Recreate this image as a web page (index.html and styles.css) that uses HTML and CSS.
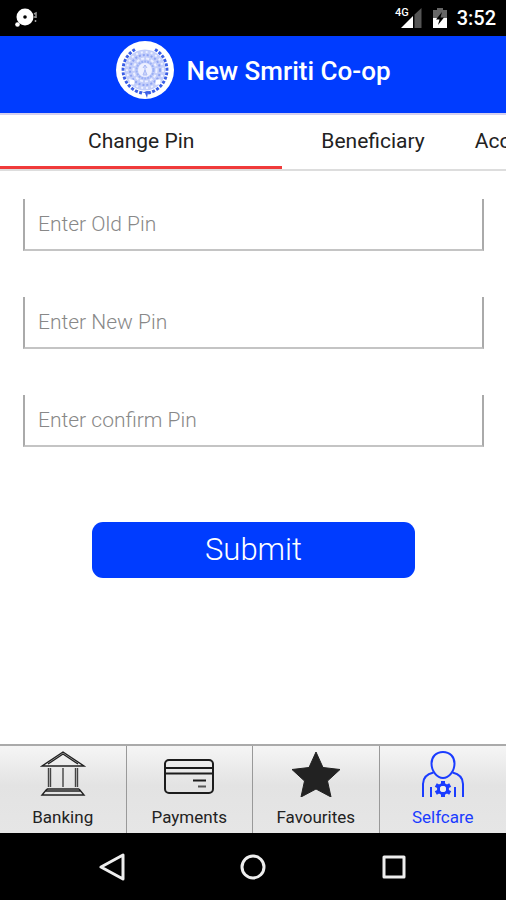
FILE: index.html
```html
<!DOCTYPE html>
<html lang="en">
<head>
    <meta charset="UTF-8">
    <meta name="viewport" content="width=device-width, initial-scale=1.0">
    <title>New Smriti Co-op</title>
    <link rel="stylesheet" href="styles.css">
</head>
<body>
    <!-- Phone status bar -->
    <div class="status-bar">
        <svg class="status-notice" width="24" height="20" viewBox="0 0 24 20">
            <circle cx="11" cy="9" r="8.5" fill="#fff"/>
            <circle cx="11" cy="9" r="1.8" fill="#000"/>
            <circle cx="3.5" cy="16.5" r="2.3" fill="#fff"/>
            <path d="M20 6l2-1v5M20 9h2M21.500 12v2" fill="none" stroke="#999" stroke-width="1.500"/>
        </svg>
        <div class="status-right">
            <div class="signal">
                <span class="network">4G</span>
                <svg width="22" height="20" viewBox="0 0 22 20">
                    <path d="M13.500 6.500L20.500 0v20h-7z" fill="#555"/>
                    <path d="M0 20L12 8v12z" fill="#fff"/>
                </svg>
            </div>
            <svg width="14" height="20" viewBox="0 0 14 20">
                <path d="M4 0h6v2h4v8H0V2h4z" fill="#666"/>
                <path d="M0 10h14v10H0z" fill="#fff"/>
                <path d="M9 4L3 11.500h3.500L5 17l6-7.500H7.500z" fill="#000"/>
            </svg>
            <span class="clock">3:52</span>
        </div>
    </div>

    <!-- App header -->
    <header class="header">
        <svg class="logo" width="60" height="60" viewBox="0 0 60 60">
            <circle cx="30" cy="29" r="29" fill="#fff"/>
            <path d="M20 8.500A23.500 23.500 0 0 0 27 52M40 8.500A23.500 23.500 0 0 1 33 52" fill="none" stroke="#3a5ee6" stroke-width="3" stroke-dasharray="3 1.500"/>
            <circle cx="30" cy="29" r="20.500" fill="#c3cefa"/>
            <circle cx="30" cy="29" r="18" fill="none" stroke="#eef1ff" stroke-width="2" stroke-dasharray="2 3"/>
            <circle cx="30" cy="29" r="15" fill="none" stroke="#8fa4f3" stroke-width="2" stroke-dasharray="2 2"/>
            <circle cx="30" cy="29" r="11.500" fill="none" stroke="#eef1ff" stroke-width="2" stroke-dasharray="3 2"/>
            <circle cx="30" cy="29" r="8.500" fill="none" stroke="#9bb0f5" stroke-width="2" stroke-dasharray="2 1"/>
            <circle cx="30" cy="29" r="7" fill="#edf0ff"/>
            <path d="M30 24v10M28 27l2-3 2 3M28 34l2-5 2 5z" fill="none" stroke="#a9b9f6" stroke-width="1"/>
            <circle cx="17" cy="41" r="2.500" fill="#fff"/>
            <circle cx="43" cy="41" r="2.500" fill="#fff"/>
            <path d="M23 50l6 1 3-1 5 1-4 1-1 5-2-5z" fill="#3a5ee6"/>
        </svg>
        <h1>New Smriti Co-op</h1>
    </header>

    <!-- Scrolling tabs -->
    <nav class="tabs">
        <a class="tab tab-wide active" href="#">Change Pin</a>
        <a class="tab" href="#">Beneficiary</a>
        <a class="tab tab-narrow" href="#">Accounts</a>
    </nav>

    <!-- Change pin form -->
    <main class="content">
        <form class="pin-form">
            <input type="password" placeholder="Enter Old Pin" aria-label="Enter Old Pin">
            <input type="password" placeholder="Enter New Pin" aria-label="Enter New Pin">
            <input type="password" placeholder="Enter confirm Pin" aria-label="Enter confirm Pin">
            <button class="submit-btn" type="submit">Submit</button>
        </form>
    </main>

    <!-- Bottom menu -->
    <nav class="bottom-nav">
        <a class="nav-item" href="#">
            <svg width="48" height="48" viewBox="0 0 48 48" fill="none" stroke="#222" stroke-width="1.400">
                <path d="M3 17L24 3l21 14zM9 15L24 5l15 10"/>
                <path d="M9.500 19v19M11.500 19v19M24 19v19M36.500 19v19M38.500 19v19" stroke="#444"/>
                <path d="M8 40h32M7 42h34M8 40L3 46h42l-5-6"/>
            </svg>
            <span>Banking</span>
        </a>
        <a class="nav-item" href="#">
            <svg width="52" height="48" viewBox="0 0 52 48" fill="none" stroke="#1c1c1c" stroke-width="2">
                <rect x="2" y="11" width="48" height="33" rx="4"/>
                <path d="M2 19h48M2 24.500h48M30 31.500h13"/>
                <path d="M35 37.500h8" stroke="#555"/>
            </svg>
            <span>Payments</span>
        </a>
        <a class="nav-item" href="#">
            <svg width="52" height="48" viewBox="0 0 52 48">
                <path d="M26 3l7 15.500 17 2-12.500 11.500 3.500 16-15-8-15 8 3.500-16L2 20.500l17-2z" fill="#222" stroke="#222" stroke-linejoin="round"/>
            </svg>
            <span>Favourites</span>
        </a>
        <a class="nav-item selected" href="#">
            <svg width="48" height="48" viewBox="0 0 48 48" fill="none" stroke="#1a3cff" stroke-width="2">
                <path d="M24 3c7 0 11.500 5 11.500 11.500C35.500 22 30 29 24 29s-11.500-7-11.500-14.500C12.500 8 17 3 24 3z"/>
                <path d="M14.500 23.500C8 25 4 29 4 35v13M33.500 23.500C40 25 44 29 44 35v13M12 38v10M36 38v10"/>
                <circle cx="24" cy="40" r="4.500" stroke-width="3"/>
                <path d="M24 35.500V32M24 44.500V48M28 37.800l3.200-1.800M20 42.200L16.800 44M28 42.200l3.200 1.800M20 37.800L16.800 36" stroke-width="4"/>
                <circle cx="24" cy="40" r="3" fill="#eee" stroke="none"/>
            </svg>
            <span>Selfcare</span>
        </a>
    </nav>

    <!-- Phone navigation keys -->
    <div class="system-nav">
        <button type="button" aria-label="Back">
            <svg width="28" height="28" viewBox="0 0 28 28" fill="none" stroke="#eee" stroke-width="3" stroke-linejoin="round">
                <path d="M25 2v24L3 14z"/>
            </svg>
        </button>
        <button type="button" aria-label="Home">
            <svg width="28" height="28" viewBox="0 0 28 28" fill="none" stroke="#eee" stroke-width="3">
                <circle cx="14" cy="14" r="11"/>
            </svg>
        </button>
        <button type="button" aria-label="Recent">
            <svg width="28" height="28" viewBox="0 0 28 28" fill="none" stroke="#eee" stroke-width="3" stroke-linejoin="round">
                <rect x="4" y="4" width="20" height="20"/>
            </svg>
        </button>
    </div>
</body>
</html>
```

FILE: styles.css
```css
* {
    box-sizing: border-box;
}

/* Main styling for the entire document */
body {
    font-family: Roboto, "Liberation Sans", sans-serif;
    background-color: #fff;
    color: #222;
    display: flex;
    flex-direction: column;
    min-height: 100vh;
    margin: 0;
}

a {
    color: inherit;
    text-decoration: none;
}

/* Status bar */
.status-bar {
    display: flex;
    justify-content: space-between;
    align-items: center;
    height: 36px;
    padding: 0 10px 0 14px;
    background-color: #000;
    color: #fff;
}

.status-right {
    display: flex;
    align-items: center;
    gap: 10px;
}

.signal {
    display: flex;
    align-items: flex-start;
}

.network {
    font-size: 11px;
    line-height: 10px;
    font-weight: 500;
    margin-right: -8px;
}

.clock {
    font-size: 20px;
    font-weight: 500;
}

/* Header styling */
.header {
    display: flex;
    justify-content: center;
    align-items: center;
    gap: 11px;
    height: 79px;
    padding-bottom: 8px;
    background-color: #003cff;
    color: #fff;
    border-bottom: 2px solid #d5d0ee;
}

.header h1 {
    margin: 0;
    font-size: 26px;
    font-weight: 500;
}

/* Tabs, cut off at the right edge */
.tabs {
    display: flex;
    height: 56px;
    overflow: hidden;
    border-bottom: 2px solid #ddd;
}

.tab {
    flex: none;
    padding: 0 39px;
    font-size: 21px;
    line-height: 52px;
    white-space: nowrap;
}

.tab-wide {
    padding: 0 88px;
}

.tab-narrow {
    padding: 0 11px;
}

.tab.active {
    border-bottom: 3px solid #f03a3a;
}

/* Form styling */
.content {
    flex: 1;
    padding: 28px 22px 28px 23px;
}

.pin-form {
    display: flex;
    flex-direction: column;
    gap: 46px;
}

.pin-form input {
    width: 100%;
    height: 52px;
    padding: 0 13px;
    border: 2px solid #aaa;
    border-top: none;
    border-bottom-color: #c4c4c4;
    background: none;
    font-family: inherit;
    font-size: 21px;
    font-weight: 300;
    outline: none;
}

.pin-form input::placeholder {
    color: #888;
    opacity: 1;
}

.submit-btn {
    align-self: center;
    width: 70%;
    height: 56px;
    margin-top: 29px;
    padding: 0 0 2px;
    border: none;
    border-radius: 11px;
    background-color: #003cff;
    color: #fff;
    font-family: inherit;
    font-size: 31px;
    font-weight: 300;
    cursor: pointer;
}

/* Bottom menu */
.bottom-nav {
    display: grid;
    grid-template-columns: repeat(4, 1fr);
    height: 89px;
    border-top: 2px solid #aaa;
    background: linear-gradient(#f5f5f5, #e3e3e3 45%, #e6e6e6);
}

.nav-item {
    display: flex;
    flex-direction: column;
    align-items: center;
    gap: 10px;
    padding-top: 3px;
    border-right: 1px solid #999;
    font-size: 17px;
    line-height: 20px;
}

.nav-item:last-child {
    border-right: none;
}

.nav-item.selected {
    color: #1a3cff;
}

/* Phone navigation keys */
.system-nav {
    display: flex;
    justify-content: center;
    align-items: center;
    gap: 113px;
    height: 67px;
    background-color: #000;
}

.system-nav button {
    display: flex;
    padding: 0;
    border: none;
    background: none;
    cursor: pointer;
}
```
